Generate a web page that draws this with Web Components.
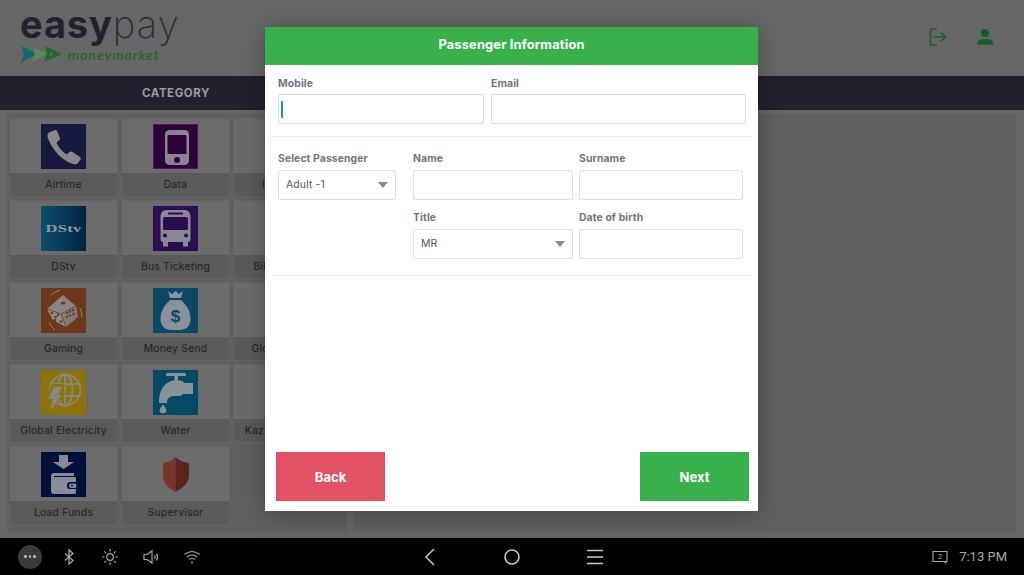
<!DOCTYPE html>
<html lang="en"><head><meta charset="utf-8"><title>Passenger Information</title>
<style>
html,body{margin:0;padding:0;width:1024px;height:575px;overflow:hidden;background:#666}
body{font-family:Inter,"Liberation Sans",sans-serif}
svg{display:block}
</style></head><body>
<pay-app>
  <pay-header slot="header"></pay-header>
  <pay-bar slot="bar">CATEGORY</pay-bar>
  <pay-panel slot="main">
    <pay-tile><svg slot="icon" viewBox="0 0 45 45" width="45" height="45"><rect width="45" height="45" fill="#17193f"/><path fill="#888" d="M9 8L14 6Q15.500 5.800 16 7L19 14Q19.400 15.400 18 16.500L15.500 18.500Q18 25 25.500 30.500L28.500 28Q30 27 31.300 27.800L39 33Q40.400 34 39.500 35.500L37 39Q35.500 41 32 40Q20 36 12 24Q6 15 6.500 11Q6.800 9 9 8Z"/></svg>Airtime</pay-tile>
    <pay-tile><svg slot="icon" viewBox="0 0 45 45" width="45" height="45"><rect width="45" height="45" fill="#4d1a60"/><rect x="1" y="1" width="43" height="43" fill="#2e003a"/><rect x="12" y="6" width="24" height="35" rx="4.500" fill="#8a848c"/><rect x="14.500" y="11" width="19" height="19" rx="1" fill="#2e003a"/><circle cx="24" cy="36" r="3" fill="#2e003a"/></svg>Data</pay-tile>
    <pay-tile clip>I</pay-tile>
    <pay-tile><svg slot="icon" viewBox="0 0 45 45" width="45" height="45"><defs><linearGradient id="d" x1="0" x2="1" y1="0" y2="0"><stop offset="0" stop-color="#0e4f70"/><stop offset="1" stop-color="#01233f"/></linearGradient></defs><rect width="45" height="45" fill="url(#d)"/><text x="4.500" y="26" fill="#8d9aa5" font-family="'Liberation Serif',serif" font-weight="700" font-size="11" textLength="36" lengthAdjust="spacingAndGlyphs">DStv</text></svg>DStv</pay-tile>
    <pay-tile><svg slot="icon" viewBox="0 0 45 45" width="45" height="45"><rect width="45" height="45" fill="#2a0e52"/><path fill="#8a8692" d="M13 4H32Q37 4.500 37.500 10V34Q37.500 36 35 36V40.500H30V36H15V40.500H10V36Q7.500 36 7.500 34V10Q8 4.500 13 4Z"/><rect x="15" y="6.500" width="15" height="2" fill="#2a0e52"/><path fill="#2a0e52" d="M12 11H33Q35 11 35 13V23Q35 24 33 24H12Q10 24 10 23V13Q10 11 12 11Z"/><circle cx="12" cy="29.500" r="2" fill="#2a0e52"/><circle cx="33" cy="29.500" r="2" fill="#2a0e52"/></svg>Bus Ticketing</pay-tile>
    <pay-tile>Bill Payments</pay-tile>
    <pay-tile><svg slot="icon" viewBox="0 0 45 45" width="45" height="45"><rect width="45" height="45" fill="#6e3818"/><path fill="#868686" d="M6 21L22 7L35 18L20 26Z"/><path fill="#8c8c8c" d="M6 21L20 26L25 39L12 32Z"/><path fill="#7c7c7c" d="M20 26L35 18L37 29L25 39Z"/><path d="M6 21L20 26L35 18M20 26L25 39" fill="none" stroke="#6e3818" stroke-width=".7"/><g fill="#6e3818"><ellipse cx="22" cy="15" rx="2.200" ry="1.500"/><circle cx="11" cy="25" r="1.300"/><circle cx="17" cy="27" r="1.300"/><circle cx="14.500" cy="29" r="1.300"/><circle cx="14" cy="32" r="1.300"/><circle cx="20" cy="33.500" r="1.300"/><circle cx="26" cy="25" r="1.200"/><circle cx="29" cy="23.500" r="1.200"/><circle cx="32" cy="22" r="1.200"/><circle cx="26" cy="29" r="1.200"/><circle cx="29" cy="27.500" r="1.200"/><circle cx="32.500" cy="26" r="1.200"/></g><path d="M10 7Q14 3.500 19 2M8 34Q10 39 14 42M39 20Q41 24 41 29" fill="none" stroke="#868686" stroke-width="1"/></svg>Gaming</pay-tile>
    <pay-tile><svg slot="icon" viewBox="0 0 45 45" width="45" height="45"><rect width="45" height="45" fill="#0b4766"/><path fill="#889298" d="M15 3L19 6L22.500 3L26 6L30 3L28 10H17Z"/><path fill="#889298" d="M17 12H28Q38 21 37.500 31Q37 42 26 42H19Q8 42 7.500 31Q7 21 17 12Z"/><text x="22.500" y="33.500" fill="#0b4766" font-family="'Liberation Sans',sans-serif" font-weight="700" font-size="17" text-anchor="middle">$</text></svg>Money Send</pay-tile>
    <pay-tile>Global Airtime</pay-tile>
    <pay-tile><svg slot="icon" viewBox="0 0 45 45" width="45" height="45"><rect width="45" height="45" fill="#8e7406"/><g fill="none" stroke="#878787" stroke-width="1.800"><circle cx="24" cy="20" r="15.500"/><ellipse cx="24" cy="20" rx="7.500" ry="15.500"/><path d="M24 4.500V35.500M9.500 14H38.500M9.500 26H38.500"/></g><path fill="#8e7406" d="M11 14H24L19 23H25L6 44L10 30H4Z"/><path fill="#878787" d="M13 17H21L17 25H21L9 41L12 29H7Z"/></svg>Global Electricity</pay-tile>
    <pay-tile><svg slot="icon" viewBox="0 0 45 45" width="45" height="45"><rect width="45" height="45" fill="#044a64"/><g fill="#869298"><rect x="13" y="3" width="20" height="3" rx="1.500"/><rect x="21.500" y="5" width="3.500" height="6"/><path d="M20 10.500H28Q30 10.500 31 13H40V24H30Q29 26 26 26H22Q15 26 14 31V33H6V30Q7 14 20 10.500Z"/><path d="M10 36Q6.500 40.500 6.500 42Q7 45 10 45Q13 45 13.500 42Q13.500 40.500 10 36Z" transform="translate(0 -1.500)"/></g></svg>Water</pay-tile>
    <pay-tile>Kazang Services</pay-tile>
    <pay-tile><svg slot="icon" viewBox="0 0 45 45" width="45" height="45"><rect width="45" height="45" fill="#00103a"/><path fill="#888c96" d="M18 3H27V10H33L22.500 17L12 10H18Z"/><path fill="#888c96" d="M10 24Q10 21 13 21H33V24H13V25H34Q35 25 35 27V30H29Q26 30 26 33.500Q26 37 29 37H35V41Q35 42 33 42H13Q10 42 10 39Z"/><rect x="28" y="31.500" width="7.500" height="4.500" rx="2" fill="#888c96"/><circle cx="31" cy="33.800" r="1" fill="#00103a"/></svg>Load Funds</pay-tile>
    <pay-tile><svg slot="icon" viewBox="0 0 45 45" width="45" height="45"><path fill="#7a3428" d="M22.500 5Q18 10 10 11V24Q10 33 22.500 40Z"/><path fill="#5a241c" d="M22.500 5Q27 10 36 11V24Q36 33 22.500 40Z"/></svg>Supervisor</pay-tile>
  </pay-panel>
  <pay-panel slot="aside" class="empty"></pay-panel>
  <pay-nav slot="nav"></pay-nav>
  <pay-modal slot="overlay">
    <span slot="title">Passenger Information</span>
    <pay-row slot="top" style="--cols:206px 255px;--gap:7px">
      <pay-field caret>Mobile</pay-field>
      <pay-field>Email</pay-field>
    </pay-row>
    <pay-row slot="mid" style="--cols:118px 330px;--gap:17px">
      <pay-field tall kind="select" value="Adult -1" style="align-self:start">Select Passenger</pay-field>
      <pay-row style="--cols:160px 164px;--gap:11px 6px">
        <pay-field tall>Name</pay-field>
        <pay-field tall>Surname</pay-field>
        <pay-field tall kind="select" value="MR">Title</pay-field>
        <pay-field tall>Date of birth</pay-field>
      </pay-row>
    </pay-row>
    <pay-button slot="back" tone="back">Back</pay-button>
    <pay-button slot="next" tone="next">Next</pay-button>
  </pay-modal>
</pay-app>
<script>
function def(name, html, init){
  const t=document.createElement('template'); t.innerHTML=html;
  customElements.define(name,class extends HTMLElement{
    constructor(){super();this.attachShadow({mode:'open'}).appendChild(t.content.cloneNode(true));}
    connectedCallback(){ if(init) init(this,this.shadowRoot); }
  });
}
def('pay-app',`<style>
:host{display:grid;position:relative;width:1024px;height:575px;grid-template-rows:76px 34px 1fr 37px;grid-template-columns:1fr;background:#666;overflow:hidden}
.main{display:flex;gap:6px;padding:3px 7px 6px 6px;min-height:0}
::slotted([slot=aside]){flex:1}
::slotted([slot=overlay]){position:absolute;left:265px;top:27px}
</style><slot name="header"></slot><slot name="bar"></slot><div class="main"><slot name="main"></slot><slot name="aside"></slot></div><slot name="nav"></slot><slot name="overlay"></slot>`);
def('pay-header',`<style>
:host{display:flex;align-items:flex-start;justify-content:space-between;background:#666;box-sizing:border-box;padding:0 28px 0 21px}
.logo{display:flex;flex-direction:column}
.word{font:700 38px/36px Inter,sans-serif;color:#22222c;letter-spacing:.9px;margin-top:6px;height:39px;margin-left:-1px}
.word b{font-weight:200;letter-spacing:1.1px;color:#2c2c36}
.sub{display:flex;align-items:center;gap:6px;margin-top:0}
.mm{font:italic 400 14px/18px Lato,sans-serif;color:#1a6129;letter-spacing:1.1px;position:relative;top:1px}
.ic{display:flex;gap:25px;margin-top:26px}
</style><div class="logo"><div class="word">easy<b>pay</b></div>
<div class="sub"><svg width="41" height="18" viewBox="0 0 41 18"><path fill="#0f6a70" d="M1 1L15 9L0 18L3 9Z"/><path fill="#5e8a5a" d="M12 2L26 9L11 17L14 9Z"/><path fill="#1a6b2c" d="M24 1L41 9L23 17L26 9Z"/><path fill="#666" d="M29 7L33 9L29 11Z"/></svg><span class="mm">moneymarket</span></div></div>
<div class="ic">
<svg width="22" height="22" viewBox="0 0 22 22" fill="none" stroke="#1b5f2a" stroke-width="1.600"><path d="M10 3H3.500V19H10"/><path d="M6.500 11H18M13.500 6.500L18.500 11L13.500 15.500"/></svg>
<svg width="22" height="22" viewBox="0 0 22 22" fill="#0f6027"><circle cx="11" cy="7" r="4"/><path d="M3 18.500V17Q3 13 11 13Q19 13 19 17V18.500Z"/></svg>
</div>`);
def('pay-bar',`<style>
:host{display:block;background:#20212b;color:#9a9a9c;font:700 11.500px/34px Inter,sans-serif;letter-spacing:.55px}
div{width:352px;text-align:center}
</style><div><slot></slot></div>`);
def('pay-panel',`<style>
:host{display:grid;grid-template-columns:repeat(3,107px);grid-auto-rows:77px;gap:5px;padding:6px 4px 0;box-sizing:border-box;background:#5f5f5f;width:341px;box-shadow:inset 0 0 0 1px #626262}
:host(.empty){width:auto;display:block}
</style><slot></slot>`);
def('pay-tile',`<style>
:host{display:flex;flex-direction:column;background:#6b6b6b;box-shadow:0 0 0 1px #646464;font:400 10.400px/23px Inter,sans-serif;color:#202020;letter-spacing:.2px;text-align:center;white-space:nowrap}
.i{height:54px;box-sizing:border-box;padding-top:5px;display:flex;justify-content:center}
.l{height:23px;background:#5a5a5a;display:flex;justify-content:center;line-height:24px}
:host([clip]) .l{justify-content:flex-start;padding-left:28px}
</style><div class="i"><slot name="icon"></slot></div><div class="l"><span class="t"><slot></slot></span></div>`);
def('pay-nav',`<style>
:host{display:flex;align-items:center;background:#000;color:#a8a8a8;font:400 13px Roboto,sans-serif;padding:0 17px 0 18px}
.c{flex:1;display:flex;align-items:center}
.mid{flex:none;display:flex;gap:59px;align-items:center;margin:0 auto;padding-right:2px}
.dots{width:24px;height:24px;border-radius:50%;background:#3a3a3a;display:flex;align-items:center;justify-content:center;gap:2px;margin-right:17px}
.dots i{width:2.400px;height:2.400px;border-radius:50%;background:#b5b5b5}
.left svg{margin-right:21px}
.right{justify-content:flex-end;gap:11px}
</style><div class="c left"><div class="dots"><i></i><i></i><i></i></div>
<svg width="20" height="20" viewBox="0 0 20 20" fill="none" stroke="#a8a8a8" stroke-width="1.300"><path d="M6 6.500L14 13.500L10 17V3L14 6.500L6 13.500"/></svg>
<svg width="20" height="20" viewBox="0 0 20 20" fill="none" stroke="#a8a8a8" stroke-width="1.200"><circle cx="10" cy="10" r="3.300"/><path d="M10 2V4.500M10 15.500V18M2 10H4.500M15.500 10H18M4.300 4.300L6.100 6.100M13.900 13.900L15.700 15.700M4.300 15.700L6.100 13.900M13.900 6.100L15.700 4.300"/></svg>
<svg width="20" height="20" viewBox="0 0 20 20" fill="none" stroke="#a8a8a8" stroke-width="1.200"><path d="M3 7.500V12.500H6L11 16V4L6 7.500Z"/><path d="M13.500 8Q15 10 13.500 12M15.500 6.500Q17.500 10 15.500 13.500"/></svg>
<svg width="20" height="20" viewBox="0 0 20 20" fill="none" stroke="#a8a8a8" stroke-width="1.200" style="margin:0"><path d="M2.500 7.500Q10 1.500 17.500 7.500M4.800 10Q10 6 15.200 10M7 12.500Q10 10.500 13 12.500"/><circle cx="10" cy="15.500" r="1" fill="#a8a8a8" stroke="none"/></svg>
</div>
<div class="mid">
<svg width="24" height="24" viewBox="0 0 24 24" fill="none" stroke="#c8c8c8" stroke-width="1.500"><path d="M17 4L9 12L17 20"/></svg>
<svg width="24" height="24" viewBox="0 0 24 24" fill="none" stroke="#c8c8c8" stroke-width="1.600"><circle cx="12" cy="12" r="7"/></svg>
<svg width="24" height="24" viewBox="0 0 24 24" fill="none" stroke="#c8c8c8" stroke-width="1.500"><path d="M4 5.500H20M4 12H20M4 18.500H20"/></svg>
</div>
<div class="c right"><svg width="16" height="14" viewBox="0 0 16 14" fill="none" stroke="#a8a8a8" stroke-width="1.100"><path d="M1 1.500H15V11.500H1Z"/><path d="M12 11.500L14.500 13.500"/><text x="8" y="9.300" fill="#a8a8a8" stroke="none" font-size="8" font-family="Roboto,sans-serif" text-anchor="middle">2</text></svg><span>7:13 PM</span></div>`);
def('pay-modal',`<style>
:host{display:flex;flex-direction:column;width:493px;height:484px;background:#fff;box-shadow:0 3px 24px rgba(0,0,0,.28);box-sizing:border-box}
header{height:38px;flex:none;background:#39b14b;color:#fff;font:700 12.800px/36px Inter,sans-serif;text-align:center;letter-spacing:.2px}
.s1{padding:12px 13px 12px}
hr{margin:0 6px;border:0;height:1px;background:#ebebeb;flex:none}
.s2{padding:15px 13px 16px}
.sp{flex:1}
footer{display:flex;justify-content:space-between;padding:0 9px 10px 11px}
</style><header><slot name="title"></slot></header><div class="s1"><slot name="top"></slot></div><hr><div class="s2"><slot name="mid"></slot></div><hr><div class="sp"></div><footer><slot name="back"></slot><slot name="next"></slot></footer>`);
def('pay-row',`<style>:host{display:grid;grid-template-columns:var(--cols);gap:var(--gap)}</style><slot></slot>`);
def('pay-field',`<style>
:host{display:flex;flex-direction:column;font:700 10.400px/13px Inter,sans-serif;color:#74747c;letter-spacing:.1px}
label{display:block;height:17px}
:host([tall]) label{height:18px}
.box{height:30px;box-sizing:border-box;border:1px solid #dedede;border-radius:2px;display:flex;align-items:center;justify-content:space-between;padding:0 7px;font:400 10.500px/1 Inter,sans-serif;color:#555}
.caret{width:1.500px;height:17px;background:#1f9c8c;margin-left:-5px;margin-right:auto}
.tri{width:0;height:0;border:5.500px solid transparent;border-top:6px solid #8a8a8a;border-bottom:0}
</style><label><slot></slot></label><div class="box"></div>`,(h,r)=>{
  const b=r.querySelector('.box'); if(b.childElementCount||b.textContent)return;
  if(h.hasAttribute('caret')){const c=document.createElement('span');c.className='caret';b.append(c);}
  if(h.getAttribute('kind')==='select'){const s=document.createElement('span');s.textContent=h.getAttribute('value');const t=document.createElement('span');t.className='tri';b.append(s,t);}
});
def('pay-button',`<style>
:host{display:flex;align-items:center;justify-content:center;width:109px;height:49px;color:#fff;font:700 13px Inter,sans-serif;background:#39b14b}
:host([tone=back]){background:#e25264}
</style><slot></slot>`);
</script>
</body></html>
